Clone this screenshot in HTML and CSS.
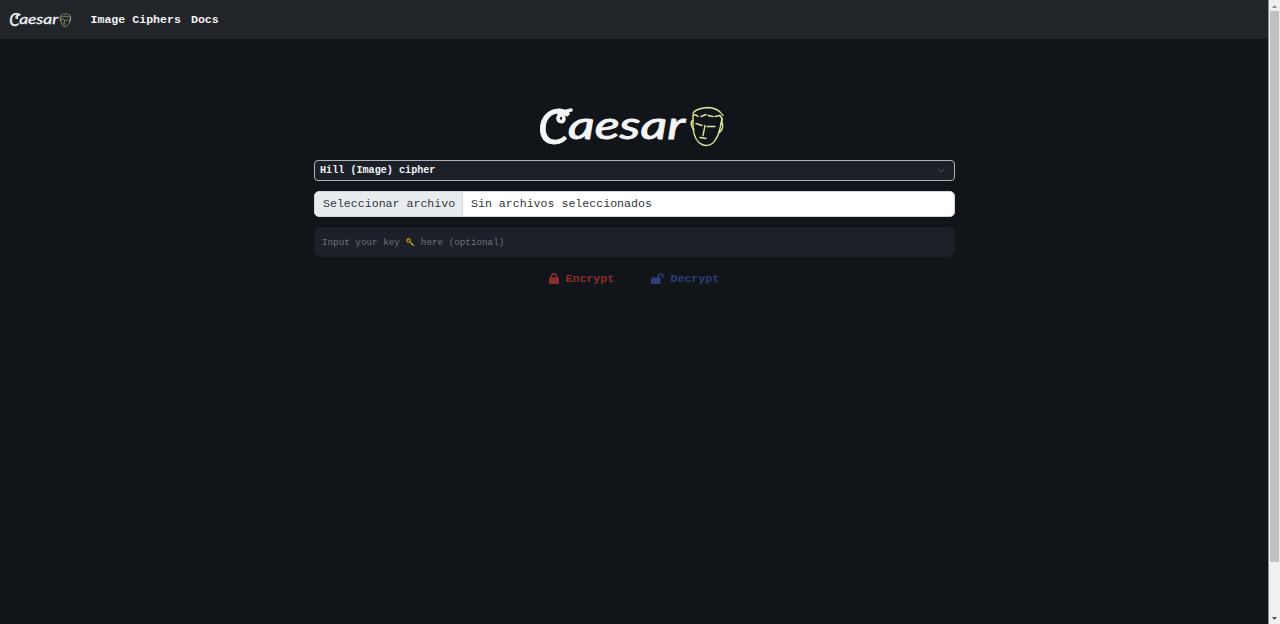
FILE: index.html
```html
<!DOCTYPE html>
<html lang="en">
<head>
<meta charset="utf-8">
<title>Caesar</title>
<link rel="stylesheet" href="styles.css">
</head>
<body>
<svg width="0" height="0" class="defs">
  <symbol id="logo" viewBox="0 0 188 42">
    <g class="word">
      <text x="0" y="38.5" font-size="49" textLength="31" lengthAdjust="spacingAndGlyphs">C</text>
      <text x="30" y="34" font-size="39" textLength="117" lengthAdjust="spacingAndGlyphs">aesar</text>
    </g>
    <path class="curl" d="M33 5C27 6 21 9 20 13c0 4 5 5 6 1 0-3-2-5-5-5"/>
    <g class="face" transform="translate(1 .5)">
      <path d="M154 8c1-3 4-4 8-5l6-1c7 0 13 3 16 8"/>
      <path d="M154 10c2-2 4 0 5 1m3 0 5-2m2 1 5 1m2 0 5-1 2 3v6"/>
      <path d="M154 10v13c1 7 4 14 9 16 4 2 10 1 13-4 3-4 4-7 5-12l2-10"/>
      <path d="M154 15c-3 0-2 7 1 9m27-6c3-1 2 7-2 9"/>
      <path d="m157 18 6 2m5 1 8 0m-10-1-2 10m-3 2 6 1"/>
    </g>
  </symbol>
</svg>
<div class="app">
  <div class="page">
    <nav class="navbar">
      <svg class="brand"><use href="#logo"/></svg>
      <a>Image Ciphers</a>
      <a>Docs</a>
    </nav>
    <main class="main">
      <svg class="logo"><use href="#logo"/></svg>
      <div class="select"><span>Hill (Image) cipher</span>
        <svg width="8" height="6" viewBox="0 0 8 6"><path d="m1 1 3 3 3-3"/></svg>
      </div>
      <div class="file"><span class="pick">Seleccionar archivo</span><span class="none">Sin archivos seleccionados</span></div>
      <div class="key"><span>Input your key</span>
        <svg width="9" height="9" viewBox="0 0 9 9"><circle cx="2.6" cy="2.6" r="1.7"/><path d="m4 4 4 3.8M6 6.1 5.3 7"/></svg>
        <span>here (optional)</span>
      </div>
      <div class="actions">
        <div class="action encrypt">
          <svg width="10" height="11" viewBox="0 0 10 11"><rect y="4.5" width="10" height="6.5" rx="1"/><path d="M2.5 5V3.2a2.5 2.5 0 0 1 5 0V5"/></svg>
          <span>Encrypt</span>
        </div>
        <div class="action decrypt">
          <svg width="13" height="11" viewBox="0 0 13 11"><rect y="4.5" width="9.5" height="6.5" rx="1"/><path d="M7.3 5V3.2a2.3 2.3 0 0 1 4.6 0V5"/></svg>
          <span>Decrypt</span>
        </div>
      </div>
    </main>
  </div>
  <div class="scrollbar">
    <svg width="5" height="3" viewBox="0 0 5 3"><path fill="#8b8b8b" d="M0 3h5L2.5 0z"/></svg>
    <div class="thumb"></div>
    <svg width="5" height="3" viewBox="0 0 5 3"><path fill="#505050" d="M0 0h5L2.5 3z"/></svg>
  </div>
</div>
</body>
</html>
```
FILE: styles.css
```css
* { box-sizing: border-box; }
body {
  margin: 0;
  background: #111519;
  color: #f3f4f5;
  font-family: "Liberation Mono", "DejaVu Sans Mono", monospace;
  overflow: hidden;
}
.defs { position: absolute; }
svg { display: block; flex: none; }
span, a { white-space: pre; }
.app { display: flex; height: 624px; }
.page { flex: 1; }
.navbar {
  display: flex;
  align-items: center;
  height: 39px;
  padding-left: 9px;
  background: #212529;
  font-size: 11.6px;
  font-weight: 700;
}
.navbar a + a { margin-left: 10px; }
.brand { width: 63px; height: 14px; margin: 1px 18.5px 0 0; }
.word { fill: #f3f5f7; stroke: #f3f5f7; stroke-width: 0.9; font-family: Lato, sans-serif; font-style: italic; font-weight: 400; }
.curl { fill: none; stroke: #f3f5f7; stroke-width: 3.6; stroke-linecap: round; }
.face { fill: none; stroke: #dce79b; stroke-width: 1.4; stroke-linecap: round; stroke-linejoin: round; }
.main {
  display: flex;
  flex-direction: column;
  width: 641px;
  margin-left: 314px;
  padding-top: 66px;
}
.logo { width: 188px; height: 42px; margin-left: 224px; }
.select {
  display: flex;
  align-items: center;
  justify-content: space-between;
  height: 21px;
  margin-top: 13px;
  padding: 0 9px 0 5px;
  border: 1px solid #aeb2b6;
  border-radius: 4px;
  background: #1c2029;
  font-size: 10.15px;
  font-weight: 700;
}
.select svg { fill: none; stroke: #3e444c; stroke-width: 1.2; }
.file {
  display: flex;
  height: 26px;
  margin-top: 10px;
  border: 1px solid #ced4da;
  border-radius: 5px;
  overflow: hidden;
  background: #fff;
  color: #30353a;
  font-size: 11.6px;
  line-height: 24px;
}
.pick { width: 148px; padding-left: 8px; background: #e9ecef; border-right: 1px solid #d6dade; }
.none { padding-left: 8px; }
.key {
  display: flex;
  align-items: center;
  height: 30px;
  margin-top: 10px;
  padding-left: 8px;
  border-radius: 7px;
  background: #1c2029;
  color: #71757a;
  font-size: 9.27px;
}
.key svg { margin: 0 6px; fill: none; stroke: #d29a12; stroke-width: 1.1; }
.actions {
  display: flex;
  margin: 15px 0 0 235px;
  font-size: 11.6px;
  font-weight: 700;
}
.action { display: flex; align-items: center; gap: 6.5px; }
.action path { fill: none; stroke: currentColor; stroke-width: 1.5; }
.action rect { fill: currentColor; }
.encrypt { width: 102px; color: #8d2e2d; }
.decrypt { color: #2c3f7b; }
.scrollbar {
  display: flex;
  flex-direction: column;
  align-items: center;
  justify-content: space-between;
  width: 12px;
  padding: 5px 0 4px;
  border-left: 1px solid #8b8d8f;
  background: #f0f0f0;
}
.thumb { width: 9px; height: 551px; margin: 3px 0 auto; background: #c1c1c1; }
```
